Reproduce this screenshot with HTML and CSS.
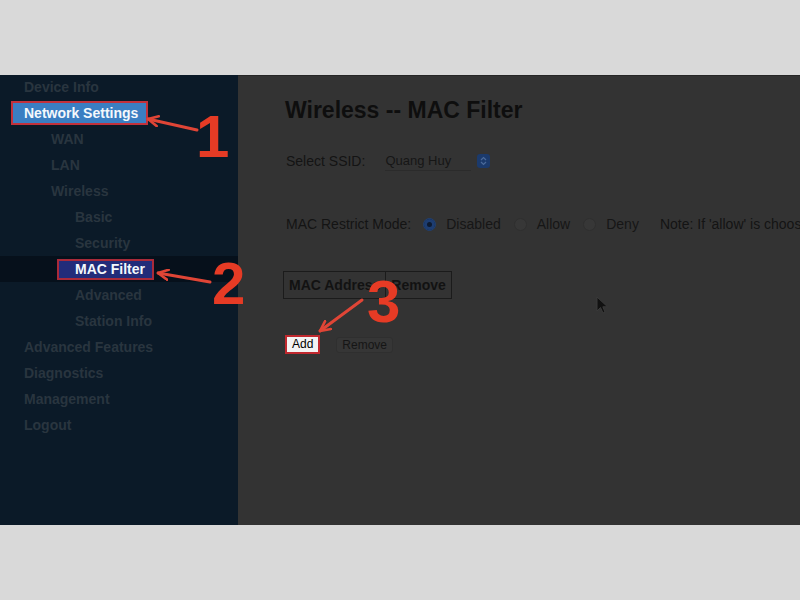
FILE: index.html
```html
<!DOCTYPE html>
<html>
<head>
<meta charset="utf-8">
<link rel="stylesheet" href="styles.css">
</head>
<body>
<div class="frame">
  <nav class="sidebar">
    <ul class="menu">
      <li class="l1">Device Info</li>
      <li class="l1"><span class="hl hl-blue">Network Settings</span></li>
      <li class="l2">WAN</li>
      <li class="l2">LAN</li>
      <li class="l2">Wireless</li>
      <li class="l3">Basic</li>
      <li class="l3">Security</li>
      <li class="l3 active"><span class="hl hl-navy">MAC Filter</span></li>
      <li class="l3">Advanced</li>
      <li class="l3">Station Info</li>
      <li class="l1">Advanced Features</li>
      <li class="l1">Diagnostics</li>
      <li class="l1">Management</li>
      <li class="l1">Logout</li>
    </ul>
  </nav>
  <main class="content">
    <h1 class="title">Wireless -- MAC Filter</h1>
    <div class="row ssid-row">
      <span class="label">Select SSID:</span>
      <div class="select">
        <span class="select-text">Quang Huy</span>
        <span class="select-btn">
          <svg width="13" height="14" viewBox="0 0 13 14"><path d="M4 6 L6.5 3.5 L9 6 M4 8 L6.5 10.5 L9 8" fill="none" stroke="#4a6a9a" stroke-width="1.2"/></svg>
        </span>
      </div>
    </div>
    <div class="row mode-row">
      <span class="label">MAC Restrict Mode:</span>
      <span class="radio radio-on"></span><span class="opt">Disabled</span>
      <span class="radio"></span><span class="opt">Allow</span>
      <span class="radio"></span><span class="opt">Deny</span>
      <span class="note">Note: If 'allow' is choosed, only the computers with matching MAC addresses can connect.</span>
    </div>
    <div class="mac-table">
      <div class="cell cell-mac">MAC Address</div>
      <div class="cell cell-remove">Remove</div>
    </div>
    <div class="row btn-row">
      <button class="btn btn-add">Add</button>
      <button class="btn btn-remove">Remove</button>
    </div>
  </main>
</div>

<svg class="annot" width="800" height="600" viewBox="0 0 800 600">
  <defs>
    <marker id="ah" viewBox="0 0 12 12" refX="11" refY="6" markerWidth="12" markerHeight="12" markerUnits="userSpaceOnUse" orient="auto">
      <path d="M1 1 L11 6 L1 11" fill="none" stroke="#e04536" stroke-width="2.6" stroke-linecap="round" stroke-linejoin="round"/>
    </marker>
  </defs>
  <line x1="197" y1="130" x2="148" y2="119" stroke="#e04536" stroke-width="3" stroke-linecap="round" marker-end="url(#ah)"/>
  <line x1="210" y1="282" x2="158" y2="273" stroke="#e04536" stroke-width="3" stroke-linecap="round" marker-end="url(#ah)"/>
  <line x1="362" y1="300" x2="320" y2="331" stroke="#e04536" stroke-width="3" stroke-linecap="round" marker-end="url(#ah)"/>
  <text class="num" x="196" y="157">1</text>
  <text class="num" x="212" y="304">2</text>
  <text class="num" x="367" y="322">3</text>
</svg>

<svg class="cursor" width="14" height="20" viewBox="0 0 14 20">
  <path d="M1 1 L1 15 L4.5 11.5 L7 17 L9 16 L6.8 10.8 L11.5 10.8 Z" fill="#111" stroke="#3a3a3a" stroke-width="1"/>
</svg>
</body>
</html>
```

FILE: styles.css
```css
html, body {
  margin: 0;
  padding: 0;
}

body {
  position: relative;
  width: 800px;
  height: 600px;
  overflow: hidden;
  background: #d9d9d9;
  font-family: "Liberation Sans", Arial, sans-serif;
  padding-top: 75px;
  box-sizing: border-box;
}

.frame {
  display: flex;
  height: 450px;
}

.sidebar {
  flex: none;
  width: 238px;
  background: #0b1a28;
}

.menu {
  list-style: none;
  margin: -1px 0 0;
  padding: 0;
}

.menu li {
  height: 26px;
  line-height: 26px;
  font-size: 14px;
  font-weight: bold;
  color: #29353f;
  white-space: nowrap;
}

.l1 { padding-left: 24px; }
.l2 { padding-left: 51px; }
.l3 { padding-left: 75px; }

.menu li.active {
  background: #06101b;
}

.hl {
  display: inline-block;
  vertical-align: middle;
  color: #f4f8fc;
  border: 2px solid #c3313b;
}

.hl-blue {
  background: #3a7ec2;
  line-height: 20px;
  margin-left: -13px;
  padding: 0 8px 0 11px;
  margin-top: -2px;
}

.hl-navy {
  background: #222c7a;
  line-height: 17px;
  margin-left: -18px;
  padding: 0 7px 0 16px;
  border-color: #a92a3a;
  margin-top: -2px;
}

.content {
  flex: 1;
  min-width: 0;
  background: #333333;
  border-top: 1px solid #262626;
  padding: 0 0 0 47px;
  color: #141414;
  overflow: hidden;
}

.title {
  margin: 0;
  padding-top: 20px;
  font-size: 23px;
  line-height: 28px;
  font-weight: bold;
  color: #0e0e0e;
}

.row {
  display: flex;
  align-items: center;
  height: 20px;
  font-size: 14px;
  white-space: nowrap;
}

.label {
  margin-left: 1px;
}

.ssid-row {
  margin-top: 27px;
}

.select {
  display: flex;
  align-items: center;
  margin-left: 20px;
}

.select-text {
  width: 86px;
  font-size: 13px;
  line-height: 18px;
  border-bottom: 1px solid #2b2b2b;
  color: #161616;
}

.select-btn {
  display: flex;
  width: 13px;
  height: 14px;
  margin-left: 6px;
  background: #1b3a6c;
  border-radius: 3px;
}

.mode-row {
  margin-top: 43px;
}

.radio {
  flex: none;
  width: 11px;
  height: 11px;
  border-radius: 50%;
  border: 1px solid #2f2f2f;
  background: #373737;
  margin: 0 10px 0 13px;
}

.radio-on {
  background: #1d3d72;
  border-color: #213f6e;
  box-shadow: inset 0 0 0 3px #1d3d72, inset 0 0 0 6px #0d1a30;
  margin-left: 12px;
}

.opt {
  color: #161616;
}

.note {
  margin-left: 21px;
}

.mac-table {
  display: inline-flex;
  margin-top: 37px;
  margin-left: -2px;
  border: 1px solid #1b1b1b;
  font-size: 14px;
  font-weight: bold;
  color: #121212;
}

.cell {
  padding: 0 5px;
  line-height: 26px;
}

.cell + .cell {
  border-left: 1px solid #1b1b1b;
}

.btn-row {
  margin-top: 36px;
  height: 19px;
}

.btn {
  font-family: "Liberation Sans", Arial, sans-serif;
  font-size: 12px;
  margin: 0;
  box-sizing: border-box;
}

.btn-add {
  height: 19px;
  line-height: 15px;
  padding: 0 5px;
  background: #f3f3f3;
  border: 2px solid #c0282e;
  color: #000;
}

.btn-remove {
  height: 16px;
  line-height: 14px;
  padding: 0 5px;
  margin-left: 16px;
  background: #363636;
  border: 1px solid #2f2f2f;
  border-radius: 3px;
  color: #151515;
}

.annot {
  position: absolute;
  left: 0;
  top: 0;
  pointer-events: none;
}

.num {
  font-family: "Liberation Sans", Arial, sans-serif;
  font-weight: bold;
  font-size: 60px;
  fill: #e63b25;
}

.cursor {
  position: absolute;
  left: 596px;
  top: 296px;
}
```
